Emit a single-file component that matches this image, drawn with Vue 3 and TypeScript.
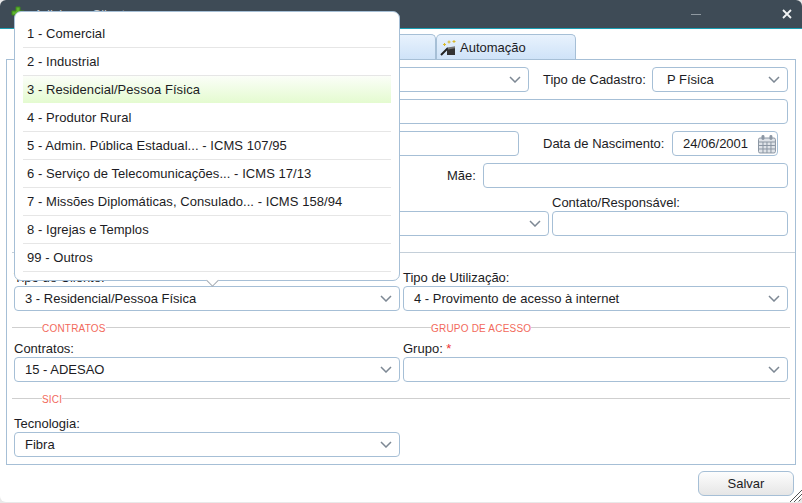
<script setup lang="ts">
const clientTypes = [
  '1 - Comercial',
  '2 - Industrial',
  '3 - Residencial/Pessoa Física',
  '4 - Produtor Rural',
  '5 - Admin. Pública Estadual... - ICMS 107/95',
  '6 - Serviço de Telecomunicações... - ICMS 17/13',
  '7 - Missões Diplomáticas, Consulado... - ICMS 158/94',
  '8 - Igrejas e Templos',
  '99 - Outros',
]
const selectedType = clientTypes[2]
</script>

<template>
  <div class="win">
    <header class="titlebar">
      <svg class="title-icon" width="14" height="14" viewBox="0 0 14 14">
        <path d="M5 1h4v4h4v4H9v4H5V9H1V5h4z" fill="#5fb32e" stroke="#3c8a1c" stroke-width="1" />
      </svg>
      <span class="title-text">Adicionar Cliente</span>
      <span class="title-min"></span>
      <svg class="title-close" width="10" height="10" viewBox="0 0 10 10">
        <path d="M1 1l8 8M9 1l-8 8" stroke="#f2f4f5" stroke-width="1.8" />
      </svg>
    </header>

    <div class="tabs">
      <div class="tab tab-first"></div>
      <div class="tab tab-auto">
        <svg width="17" height="17" viewBox="0 0 17 17">
          <path d="M1 16l7-7" stroke="#222" stroke-width="2" />
          <path d="M7 9l8-1v8H7z" fill="#333" />
          <path d="M8 8.5l7-1.2v2L8 10.5z" fill="#777" />
          <path d="M9 1.5v3M7.5 3h3M14 1v3M12.5 2.5h3M4.5 4v3M3 5.500h3" stroke="#d9b92c" stroke-width="1" />
        </svg>
        <span>Automação</span>
      </div>
    </div>

    <main class="panel">
      <div class="row">
        <div class="select grow"><span></span><svg class="chev" width="12" height="7" viewBox="0 0 12 7"><path d="M1 1l5 5 5-5" /></svg></div>
        <label class="side-label cadastro">Tipo de Cadastro:</label>
        <div class="select cadastro-select"><span>P Física</span><svg class="chev" width="12" height="7" viewBox="0 0 12 7"><path d="M1 1l5 5 5-5" /></svg></div>
      </div>
      <div class="row"><div class="input grow"></div></div>
      <div class="row">
        <div class="input name-input"></div>
        <label class="side-label nasc">Data de Nascimento:</label>
        <div class="input date">
          <span>24/06/2001</span>
          <svg width="20" height="20" viewBox="0 0 20 20">
            <rect x="1.500" y="4" width="17" height="15" rx="1.500" fill="#dfe3e8" stroke="#8b96a3" />
            <path d="M2 8h16M2 11.500h16M2 15h16M6 8v11M10 8v11M14 8v11" stroke="#8b96a3" />
            <rect x="4.500" y="1" width="3" height="5" rx="1.500" fill="#8b96a3" />
            <rect x="12.500" y="1" width="3" height="5" rx="1.500" fill="#8b96a3" />
          </svg>
        </div>
      </div>
      <div class="row">
        <label class="side-label mae">Mãe:</label>
        <div class="input grow"></div>
      </div>
      <div class="contact-grid">
        <div class="select contact-select"><span></span><svg class="chev" width="12" height="7" viewBox="0 0 12 7"><path d="M1 1l5 5 5-5" /></svg></div>
        <div class="field">
          <label>Contato/Responsável:</label>
          <div class="input"></div>
        </div>
      </div>

      <div class="section first-section">
        <div class="cols">
          <div class="field">
            <label>Tipo de Cliente:</label>
            <div class="select"><span>{{ selectedType }}</span><svg class="chev" width="12" height="7" viewBox="0 0 12 7"><path d="M1 1l5 5 5-5" /></svg></div>
          </div>
          <div class="field">
            <label>Tipo de Utilização:</label>
            <div class="select"><span>4 - Provimento de acesso à internet</span><svg class="chev" width="12" height="7" viewBox="0 0 12 7"><path d="M1 1l5 5 5-5" /></svg></div>
          </div>
        </div>
      </div>

      <div class="section">
        <div class="cols legends">
          <div><span class="legend">CONTRATOS</span></div>
          <div><span class="legend">GRUPO DE ACESSO</span></div>
        </div>
        <div class="cols">
          <div class="field">
            <label>Contratos:</label>
            <div class="select"><span>15 - ADESAO</span><svg class="chev" width="12" height="7" viewBox="0 0 12 7"><path d="M1 1l5 5 5-5" /></svg></div>
          </div>
          <div class="field">
            <label>Grupo: <em>*</em></label>
            <div class="select"><span></span><svg class="chev" width="12" height="7" viewBox="0 0 12 7"><path d="M1 1l5 5 5-5" /></svg></div>
          </div>
        </div>
      </div>

      <div class="section sici">
        <div class="cols legends">
          <div><span class="legend">SICI</span></div>
        </div>
        <div class="cols">
          <div class="field">
            <label>Tecnologia:</label>
            <div class="select"><span>Fibra</span><svg class="chev" width="12" height="7" viewBox="0 0 12 7"><path d="M1 1l5 5 5-5" /></svg></div>
          </div>
        </div>
      </div>
    </main>

    <footer class="footer">
      <button class="save">Salvar</button>
    </footer>

    <svg class="grip" width="12" height="12" viewBox="0 0 12 12">
      <path d="M0 12L12 0M4 12l8-8M8 12l4-4" stroke="#555" stroke-width="1" />
    </svg>

    <!-- dropdown aberto sobre o formulario -->
    <div class="dropdown">
      <div
        v-for="item in clientTypes"
        :key="item"
        class="dropdown-item"
        :class="{ active: item === selectedType }"
      >
        {{ item }}
      </div>
      <i class="dropdown-arrow"></i>
    </div>
  </div>
</template>

<style>
html, body {
  margin: 0;
  background: #e9e9e9;
}
</style>

<style scoped>
.win {
  position: relative;
  width: 802px;
  height: 502px;
  background: #fff;
  border-radius: 6px;
  overflow: hidden;
  display: flex;
  flex-direction: column;
  font-family: "Liberation Sans", Arial, sans-serif;
  font-size: 13px;
  color: #1c1c24;
}
.titlebar {
  height: 28px;
  flex-shrink: 0;
  background: #3e4b56;
  border-bottom: 1px solid #1b9fb3;
  display: flex;
  align-items: center;
  padding: 0 10px 0 11px;
}
.title-icon {
  margin-top: -3px;
}
.title-text {
  margin-left: 9px;
  color: #c6ccd1;
  font-size: 13px;
  flex: 1;
}
.title-min {
  width: 10px;
  height: 1px;
  background: #8f99a1;
  margin-right: 81px;
}
.tabs {
  display: flex;
  height: 25px;
  margin-top: 5px;
  padding-left: 20px;
  flex-shrink: 0;
}
.tab {
  box-sizing: border-box;
  border: 1px solid #a6bfd6;
  border-bottom: 0;
  border-radius: 5px 5px 0 0;
  background: linear-gradient(#e8f2fd, #cfe3f8);
}
.tab-first {
  width: 416px;
}
.tab-auto {
  width: 140px;
  display: flex;
  align-items: center;
  gap: 3px;
  padding-left: 3px;
}
.panel {
  box-sizing: border-box;
  height: 406px;
  margin: 0 6px;
  border: 1px solid #a6bfd6;
  padding: 7px;
  flex-shrink: 0;
}
.row {
  display: flex;
  align-items: center;
  height: 25px;
  margin-bottom: 7px;
}
.grow {
  flex: 1;
}
.select,
.input {
  box-sizing: border-box;
  height: 25px;
  border: 1px solid #a6bfd6;
  border-radius: 4px;
  background: #fff;
  display: flex;
  align-items: center;
}
.select {
  justify-content: space-between;
  padding: 0 7px 0 10px;
}
.chev {
  flex-shrink: 0;
  fill: none;
  stroke: #7d8894;
  stroke-width: 1.5;
}
.side-label {
  white-space: nowrap;
}
.cadastro {
  margin-left: 14px;
  width: 109px;
}
.cadastro-select {
  width: 136px;
  padding-left: 14px;
}
.name-input {
  width: 505px;
}
.nasc {
  margin-left: 24px;
  width: 129px;
}
.date {
  width: 106px;
  padding: 0 0 0 10px;
  gap: 9px;
}
.mae {
  margin-left: 433px;
  width: 36px;
}
.contact-grid {
  display: grid;
  grid-template-columns: 535px 236px;
  column-gap: 3px;
  align-items: end;
  height: 48px;
  margin-top: -7px;
  padding-bottom: 16px;
}
.field {
  display: flex;
  flex-direction: column;
}
.field label {
  height: 16px;
  line-height: 16px;
  white-space: nowrap;
}
.field em {
  color: #e33;
  font-style: normal;
}
.section {
  border-top: 1px solid #cfcfcf;
  margin: 0 -2px;
  padding: 0 2px;
}
.first-section {
  margin-right: -7px;
  border-top-color: #c4cfd9;
  padding-top: 17px;
  padding-right: 7px;
  height: 57px;
  box-sizing: content-box;
}
.cols {
  display: grid;
  grid-template-columns: 386px 385px;
  column-gap: 3px;
}
.legends {
  height: 13px;
  margin-bottom: 0;
}
.legend {
  position: relative;
  top: -8px;
  left: 28px;
  display: inline-block;
  padding: 0;
  background: #fff;
  color: #f26a5c;
  font-size: 10px;
  letter-spacing: 0.2px;
  line-height: 14px;
}
.sici {
  margin-top: 16px;
}
.sici .legends {
  height: 17px;
}
.footer {
  display: flex;
  justify-content: flex-end;
  padding: 6px 8px 0 0;
}
.save {
  box-sizing: border-box;
  width: 96px;
  height: 25px;
  border: 1px solid #a6bfd6;
  border-radius: 6px;
  background: linear-gradient(#fdfdfd, #e6e6e6);
  font: inherit;
  color: inherit;
}
.grip {
  position: absolute;
  right: 0;
  bottom: 0;
}
.dropdown {
  position: absolute;
  top: 11px;
  left: 14px;
  width: 386px;
  box-sizing: border-box;
  padding: 8px;
  background: #fff;
  border: 1px solid #a6bfd6;
  border-radius: 7px;
}
.dropdown-item {
  box-sizing: border-box;
  height: 28px;
  line-height: 27px;
  padding-left: 4px;
  border-bottom: 1px solid #e6e6e6;
  white-space: nowrap;
  letter-spacing: 0.06px;
}
.dropdown-item.active {
  background: linear-gradient(#fbfef8, #e4fbd0);
  border-bottom-color: #fff;
}
.dropdown-arrow {
  position: absolute;
  left: 193px;
  bottom: -5px;
  width: 8px;
  height: 8px;
  background: #fff;
  border-right: 1px solid #a0a8b0;
  border-bottom: 1px solid #a0a8b0;
  transform: rotate(45deg);
}
</style>
